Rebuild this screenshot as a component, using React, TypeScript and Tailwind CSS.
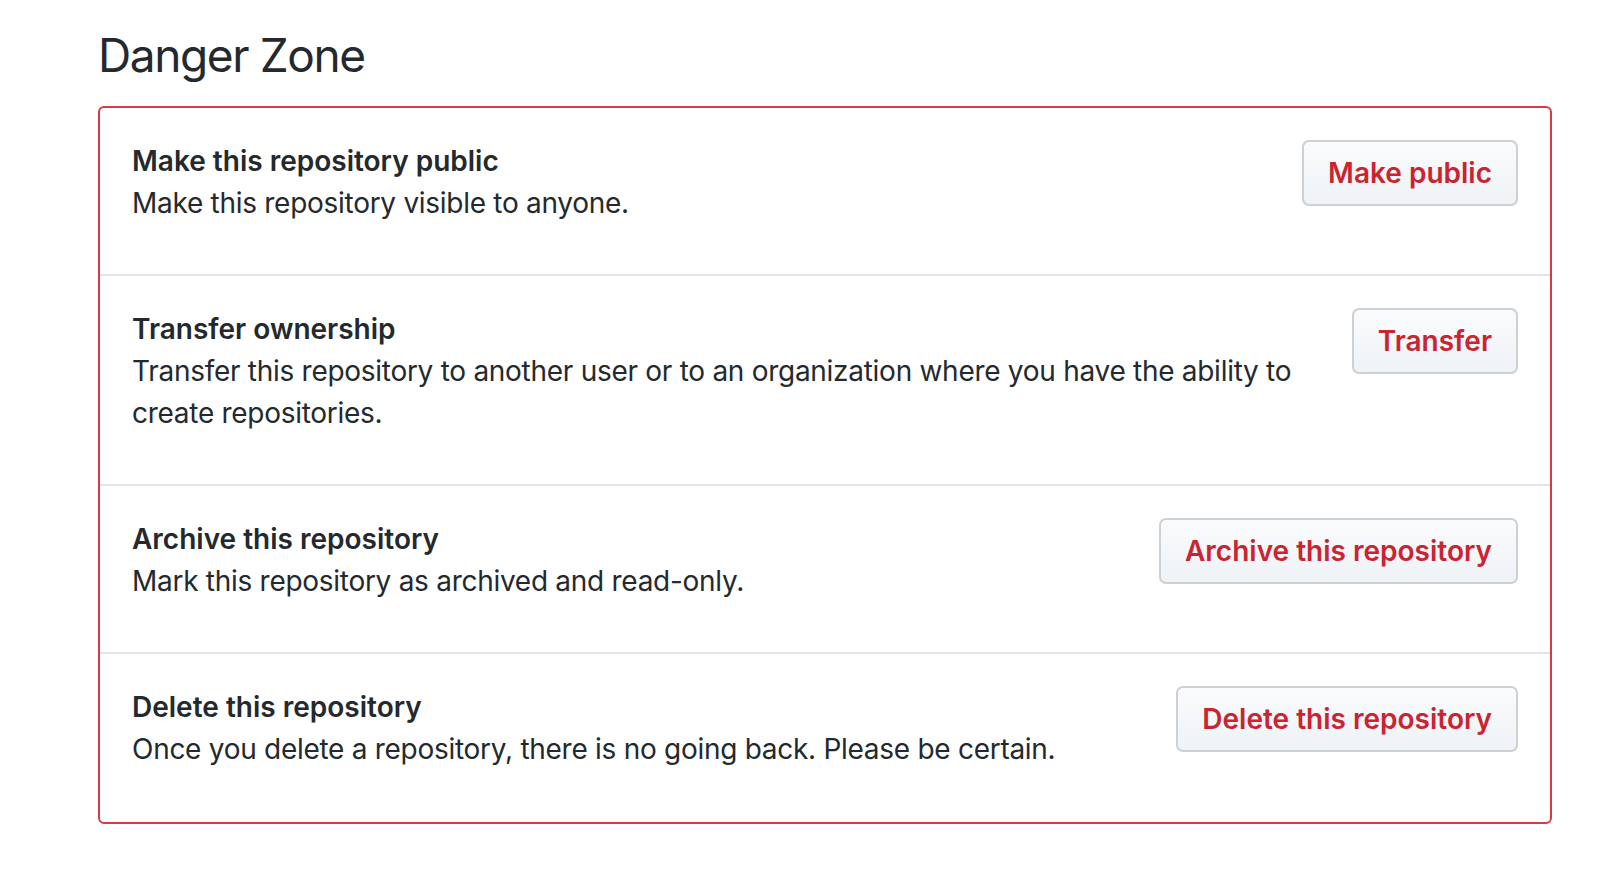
const rows = [
  {
    title: 'Make this repository public',
    desc: 'Make this repository visible to anyone.',
    action: 'Make public',
  },
  {
    title: 'Transfer ownership',
    desc: 'Transfer this repository to another user or to an organization where you have the ability to create repositories.',
    action: 'Transfer',
  },
  {
    title: 'Archive this repository',
    desc: 'Mark this repository as archived and read-only.',
    action: 'Archive this repository',
  },
  {
    title: 'Delete this repository',
    desc: 'Once you delete a repository, there is no going back. Please be certain.',
    action: 'Delete this repository',
  },
];

export default function App() {
  return (
    <div className="min-h-screen bg-white font-['Inter',sans-serif] text-[#24292e]">
      <div className="pl-[98px] pr-[66px] pt-[25px]">
        <h2 className="mb-[21px] text-[46px] font-normal leading-[60px] tracking-[-1.4px]">Danger Zone</h2>

        {/* Danger box */}
        <div className="rounded-[6px] border-2 border-[#d73a49]">
          {rows.map((row, i) => (
            <div
              key={row.title}
              className={`flex items-start px-[32px] pt-[32px] ${i === rows.length - 1 ? 'pb-[34px]' : 'pb-[32px]'} ${i > 0 ? 'border-t-2 border-[#e1e4e8]' : ''}`}
            >
              <div className="flex-1 text-[28px] leading-[42px]">
                <strong className="block font-semibold">{row.title}</strong>
                <p className="mb-[18px] tracking-[-0.01em]">{row.desc}</p>
              </div>
              <button className="ml-[32px] shrink-0 rounded-[7px] border-2 border-[#cdd0d4] bg-gradient-to-b from-[#fafbfc] to-[#eff3f6] px-[24px] py-[11px] text-[28px] font-semibold leading-[40px] text-[#cb2431]">
                {row.action}
              </button>
            </div>
          ))}
        </div>
      </div>
    </div>
  );
}
